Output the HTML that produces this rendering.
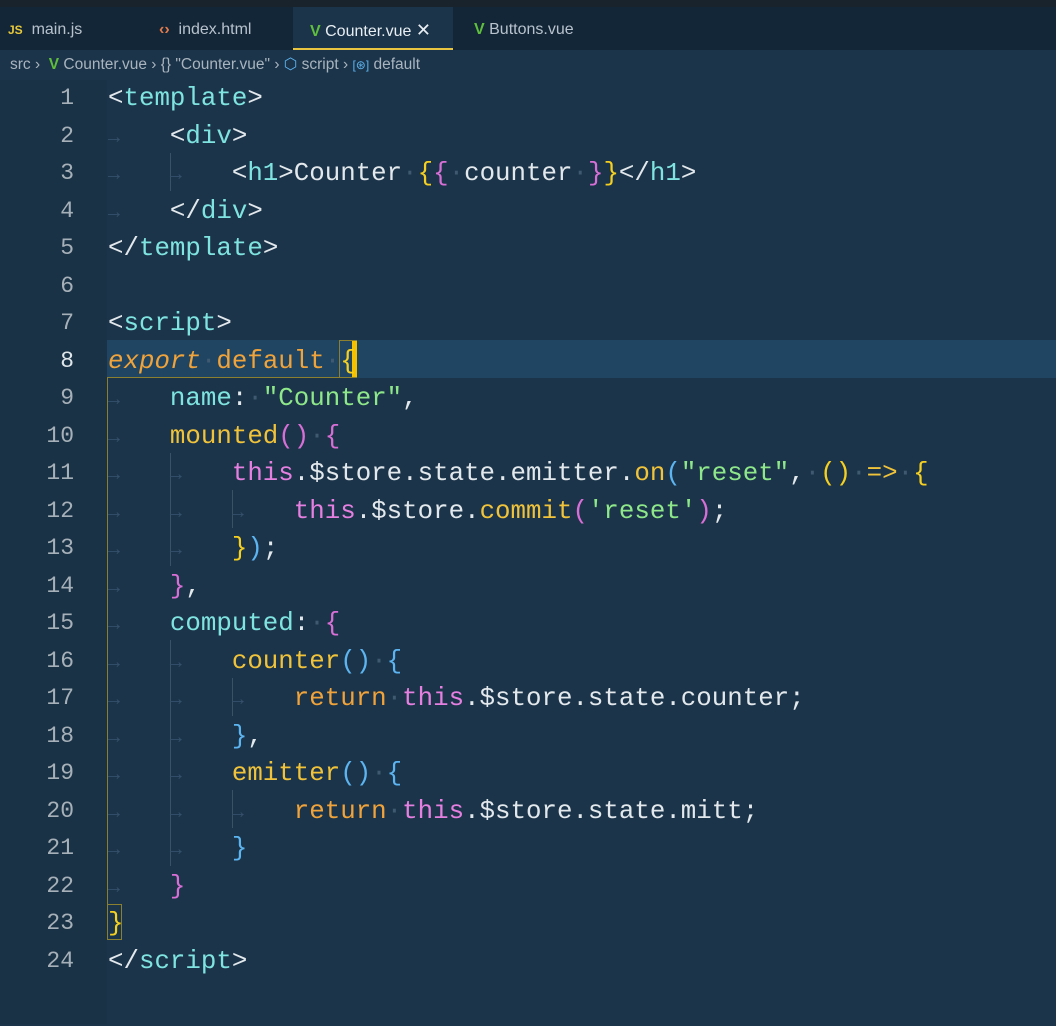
<!DOCTYPE html>
<html><head><meta charset="utf-8"><style>
*{margin:0;padding:0;box-sizing:border-box}
body{width:1056px;height:1024px;background:#1b344a;overflow:hidden;position:relative;font-family:"Liberation Sans",sans-serif}
.top{position:absolute;left:0;top:0;width:1056px;height:7px;background:#18232c}
.tabs{position:absolute;left:0;top:7px;width:1056px;height:43px;background:#132637}
.tab{position:absolute;top:7px;height:43px;line-height:46px;font-size:16px;color:#b8c2cc}
.tab.act{background:#1b344a;color:#e8eef2;border-bottom:2px solid #e8c440}
.crumb{position:absolute;top:50px;left:0;width:1056px;height:30px;line-height:30px;font-size:15.5px;color:#a9b4be;padding-left:10px;white-space:pre}
.v{color:#5fbf3c;font-weight:bold}
.gut{position:absolute;left:0;top:80px;width:107px;height:944px;background:#1a3246}
.ln{position:absolute;left:0;width:74px;text-align:right;font-family:"Liberation Mono",monospace;font-size:23px;color:#a6b0b8;height:37.5px;line-height:37.5px}
.ln.cur{color:#dfe6ea}
.hl{position:absolute;left:107px;top:340px;width:949px;height:38px;background:#1f4562}
.code{position:absolute;left:108px;font-family:"Liberation Mono",monospace;font-size:25.8px;white-space:pre;height:37.5px;line-height:37.5px;color:#e2e8ec}
.d{color:#3f5a70}
.a{color:#34506a;font-size:20px;display:inline-block;width:15.48px;overflow:visible}
.t{color:#7fe3e0}
.k{color:#f0a33a}
.i{font-style:italic}
.th{color:#e57fe0}
.s{color:#8ee88a}
.p{color:#7fe3e0}
.f{color:#f0c33a}
.b1{color:#f5d020}.b2{color:#d86fd6}.b3{color:#5cb4f0}
.g{position:absolute;width:1px;background:#3a5266}
.L{position:absolute;left:0;top:2px;width:1056px;height:1024px}
</style></head><body>
<div class="top"></div>
<div class="tabs"></div>
<div class="tab" style="left:8px"><span style="color:#e8c93a;font-weight:bold;font-size:12px">JS</span>&nbsp; main.js</div>
<div class="tab" style="left:159px"><span style="color:#e37a4a;font-weight:bold">‹›</span>&nbsp; index.html</div>
<div class="tab act" style="left:293px;width:160px;padding-left:17px"><span class="v">V</span> Counter.vue <span style="font-size:18px">✕</span></div>
<div class="tab" style="left:474px"><span class="v">V</span> Buttons.vue</div>
<div class="crumb">src ›  <span class="v">V</span> Counter.vue › {} "Counter.vue" › <span style="color:#5cb4f0">⬡</span> script › <span style="color:#5cb4f0;font-size:12px">[⊛]</span> default</div>
<div class="gut"></div>
<div class="hl"></div>
<div style="position:absolute;left:107px;top:378px;width:1px;height:558px;background:#8a8030"></div>
<div style="position:absolute;left:107px;top:377px;width:232px;height:1px;background:#8a8030"></div>
<div style="position:absolute;left:339px;top:340px;width:18px;height:38px;border:1px solid #8a8030"></div>
<div style="position:absolute;left:352px;top:341px;width:5px;height:36px;background:#f5c000"></div>
<div style="position:absolute;left:107px;top:904px;width:15px;height:36px;border:1px solid #8a8030"></div>
<div class="g" style="left:170px;top:153px;height:38px"></div>
<div class="g" style="left:170px;top:453px;height:113px"></div>
<div class="g" style="left:232px;top:490px;height:38px"></div>
<div class="g" style="left:170px;top:640px;height:226px"></div>
<div class="g" style="left:232px;top:678px;height:38px"></div>
<div class="g" style="left:232px;top:790px;height:38px"></div>
<div class="L">
<div class="ln" style="top:78px">1</div>
<div class="ln" style="top:116px">2</div>
<div class="ln" style="top:153px">3</div>
<div class="ln" style="top:191px">4</div>
<div class="ln" style="top:228px">5</div>
<div class="ln" style="top:266px">6</div>
<div class="ln" style="top:303px">7</div>
<div class="ln cur" style="top:341px">8</div>
<div class="ln" style="top:378px">9</div>
<div class="ln" style="top:416px">10</div>
<div class="ln" style="top:453px">11</div>
<div class="ln" style="top:491px">12</div>
<div class="ln" style="top:528px">13</div>
<div class="ln" style="top:566px">14</div>
<div class="ln" style="top:603px">15</div>
<div class="ln" style="top:641px">16</div>
<div class="ln" style="top:678px">17</div>
<div class="ln" style="top:716px">18</div>
<div class="ln" style="top:753px">19</div>
<div class="ln" style="top:791px">20</div>
<div class="ln" style="top:828px">21</div>
<div class="ln" style="top:866px">22</div>
<div class="ln" style="top:903px">23</div>
<div class="ln" style="top:941px">24</div>

<div class="code" style="top:78px">&lt;<span class="t">template</span>&gt;</div>
<div class="code" style="top:116px"><span class="a">→</span>   &lt;<span class="t">div</span>&gt;</div>
<div class="code" style="top:153px"><span class="a">→</span>   <span class="a">→</span>   &lt;<span class="t">h1</span>&gt;Counter<span class="d">·</span><span class="b1">{</span><span class="b2">{</span><span class="d">·</span>counter<span class="d">·</span><span class="b2">}</span><span class="b1">}</span>&lt;/<span class="t">h1</span>&gt;</div>
<div class="code" style="top:191px"><span class="a">→</span>   &lt;/<span class="t">div</span>&gt;</div>
<div class="code" style="top:228px">&lt;/<span class="t">template</span>&gt;</div>
<div class="code" style="top:303px">&lt;<span class="t">script</span>&gt;</div>
<div class="code" style="top:341px"><span class="k i">export</span><span class="d">·</span><span class="k">default</span><span class="d">·</span><span class="b1">{</span></div>
<div class="code" style="top:378px"><span class="a">→</span>   <span class="p">name</span>:<span class="d">·</span><span class="s">"Counter"</span>,</div>
<div class="code" style="top:416px"><span class="a">→</span>   <span class="f">mounted</span><span class="b2">()</span><span class="d">·</span><span class="b2">{</span></div>
<div class="code" style="top:453px"><span class="a">→</span>   <span class="a">→</span>   <span class="th">this</span>.$store.state.emitter.<span class="f">on</span><span class="b3">(</span><span class="s">"reset"</span>,<span class="d">·</span><span class="b1">()</span><span class="d">·</span><span class="f">=&gt;</span><span class="d">·</span><span class="b1">{</span></div>
<div class="code" style="top:491px"><span class="a">→</span>   <span class="a">→</span>   <span class="a">→</span>   <span class="th">this</span>.$store.<span class="f">commit</span><span class="b2">(</span><span class="s">'reset'</span><span class="b2">)</span>;</div>
<div class="code" style="top:528px"><span class="a">→</span>   <span class="a">→</span>   <span class="b1">}</span><span class="b3">)</span>;</div>
<div class="code" style="top:566px"><span class="a">→</span>   <span class="b2">}</span>,</div>
<div class="code" style="top:603px"><span class="a">→</span>   <span class="p">computed</span>:<span class="d">·</span><span class="b2">{</span></div>
<div class="code" style="top:641px"><span class="a">→</span>   <span class="a">→</span>   <span class="f">counter</span><span class="b3">()</span><span class="d">·</span><span class="b3">{</span></div>
<div class="code" style="top:678px"><span class="a">→</span>   <span class="a">→</span>   <span class="a">→</span>   <span class="k">return</span><span class="d">·</span><span class="th">this</span>.$store.state.counter;</div>
<div class="code" style="top:716px"><span class="a">→</span>   <span class="a">→</span>   <span class="b3">}</span>,</div>
<div class="code" style="top:753px"><span class="a">→</span>   <span class="a">→</span>   <span class="f">emitter</span><span class="b3">()</span><span class="d">·</span><span class="b3">{</span></div>
<div class="code" style="top:791px"><span class="a">→</span>   <span class="a">→</span>   <span class="a">→</span>   <span class="k">return</span><span class="d">·</span><span class="th">this</span>.$store.state.mitt;</div>
<div class="code" style="top:828px"><span class="a">→</span>   <span class="a">→</span>   <span class="b3">}</span></div>
<div class="code" style="top:866px"><span class="a">→</span>   <span class="b2">}</span></div>
<div class="code" style="top:903px"><span class="b1">}</span></div>
<div class="code" style="top:941px">&lt;/<span class="t">script</span>&gt;</div>
</div>
</body></html>
